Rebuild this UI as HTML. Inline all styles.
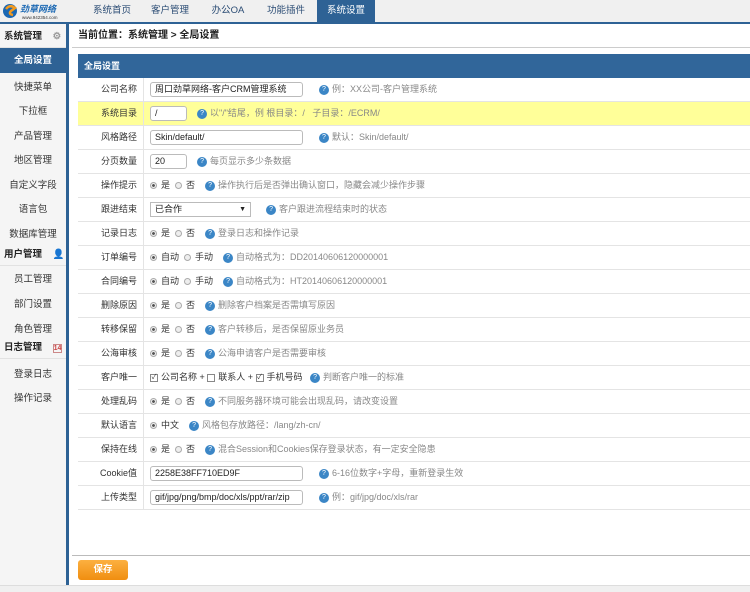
<!DOCTYPE html>
<html><head><meta charset="utf-8"><style>
*{margin:0;padding:0;box-sizing:border-box}
body{width:750px;height:592px;overflow:hidden;background:#fff;font-family:"Liberation Sans","Noto Sans CJK SC",sans-serif;font-size:9px;color:#333;position:relative}
.top{position:absolute;left:0;top:0;width:750px;height:24px;background:#f0f0f0;border-bottom:2px solid #2e6295}
.logo{position:absolute;left:2px;top:2px;width:70px;height:18px}
.tab{position:absolute;top:0;height:22px;width:58px;text-align:center;line-height:22px;font-size:9.5px;color:#2c4d75}
.tab.on{background:#2e6295;color:#fff}
.side{position:absolute;left:0;top:24px;width:69px;height:561px;background:#f5f5f5;border-right:3px solid #2e6295}
.sh{position:absolute;left:0;width:66px;height:22px;line-height:22px;padding-left:4px;font-size:9.5px;font-weight:bold;color:#222;border-bottom:1px solid #e2e2e2}
.si{position:absolute;left:0;width:66px;text-align:center;font-size:9.5px;color:#333}
.si.on{background:#2e6295;color:#fff;height:25px;line-height:25px;font-weight:bold}
.bc{position:absolute;left:72px;top:24px;width:678px;height:24px;line-height:24px;padding-left:6px;font-size:10px;font-weight:bold;color:#222;border-bottom:1px solid #ccc}
.ph{position:absolute;left:78px;top:54px;width:672px;height:24px;background:#31669a;color:#fff;font-weight:bold;line-height:24px;padding-left:6px;font-size:9px}
.row{position:absolute;left:78px;width:672px;height:24px;border-bottom:1px solid #e4e4e4;line-height:23px}
.row.y{background:#ffff99}
.lb{position:absolute;left:0;top:0;width:66px;height:23px;text-align:right;padding-right:6px;border-right:1px solid #e4e4e4;color:#333}
.v{position:absolute;left:72px;top:0;height:23px;white-space:nowrap}
.in{display:inline-block;vertical-align:middle;height:15px;border:1px solid #bbb;border-radius:3px;line-height:13px;padding-left:4px;background:#fff;color:#222}
.q{display:inline-block;vertical-align:middle;width:10px;height:10px;border-radius:50%;background:#3b86c6;color:#fff;font-size:7px;line-height:10px;text-align:center;margin:0 3px 0 0}
.w{margin-left:16px}
.h{color:#888}
.r{display:inline-block;vertical-align:middle;width:7px;height:7px;border-radius:50%;border:1px solid #aaa;background:#eee;margin-right:4px}
.r.c{background:radial-gradient(#555 35%,#eee 45%)}
.cb{display:inline-block;vertical-align:middle;width:8px;height:8px;border:1px solid #888;background:#fff;margin-right:3px;font-size:7px;line-height:6px;text-align:center}
.btn{position:absolute;left:78px;top:560px;width:50px;height:20px;background:linear-gradient(#fcb040,#f08e10);border-radius:3px;color:#fff;font-weight:bold;text-align:center;line-height:20px;font-size:9.5px}
</style></head><body>
<div class="top">
<svg class="logo" viewBox="0 0 70 18"><circle cx="8" cy="9" r="7" fill="#1b68b3"/><path d="M4 7 Q8 2 13 6 L9 9 Q6 12 11 13" stroke="#f39a1e" stroke-width="2.5" fill="none"/><text x="18" y="10" font-size="9" font-weight="bold" font-style="italic" fill="#1b68b3" font-family="Noto Sans CJK SC">劲草网络</text><text x="20" y="17" font-size="4.5" fill="#333">www.942354.com</text></svg>
<div class="tab" style="left:83px">系统首页</div>
<div class="tab" style="left:141px">客户管理</div>
<div class="tab" style="left:199px">办公OA</div>
<div class="tab" style="left:257px">功能插件</div>
<div class="tab on" style="left:317px">系统设置</div>
</div>
<div class="side">
<div class="sh" style="top:2px">系统管理 <span style="color:#999;margin-left:8px">⚙</span></div>
<div class="si on" style="top:24px">全局设置</div>
<div class="si" style="top:55px">快捷菜单</div>
<div class="si" style="top:79px">下拉框</div>
<div class="si" style="top:104px">产品管理</div>
<div class="si" style="top:128px">地区管理</div>
<div class="si" style="top:153px">自定义字段</div>
<div class="si" style="top:177px">语言包</div>
<div class="si" style="top:202px">数据库管理</div>
<div class="sh" style="top:220px">用户管理 <span style="color:#e08a3a;margin-left:8px">👤</span></div>
<div class="si" style="top:247px">员工管理</div>
<div class="si" style="top:272px">部门设置</div>
<div class="si" style="top:297px">角色管理</div>
<div class="sh" style="top:313px">日志管理 <span style="color:#c44;margin-left:8px;font-size:7px;border:1px solid #c88">14</span></div>
<div class="si" style="top:342px">登录日志</div>
<div class="si" style="top:366px">操作记录</div>
</div>
<div class="bc">当前位置：系统管理 &gt; 全局设置</div>
<div class="ph">全局设置</div>

<div class="row" style="top:78px"><div class="lb">公司名称</div><div class="v"><span class="in" style="width:153px">周口劲草网络-客户CRM管理系统</span><span class="q w">?</span><span class="h">例：XX公司-客户管理系统</span></div></div>
<div class="row y" style="top:102px"><div class="lb">系统目录</div><div class="v"><span class="in" style="width:37px">/</span> &nbsp; &nbsp;<span class="q">?</span><span class="h">以"/"结尾，例 根目录：/ &nbsp; 子目录：/ECRM/</span></div></div>
<div class="row" style="top:126px"><div class="lb">风格路径</div><div class="v"><span class="in" style="width:153px">Skin/default/</span><span class="q w">?</span><span class="h">默认：Skin/default/</span></div></div>
<div class="row" style="top:150px"><div class="lb">分页数量</div><div class="v"><span class="in" style="width:37px">20</span> &nbsp; &nbsp;<span class="q">?</span><span class="h">每页显示多少条数据</span></div></div>
<div class="row" style="top:174px"><div class="lb">操作提示</div><div class="v"><span class="r c"></span>是 &nbsp;<span class="r"></span>否 &nbsp; &nbsp;<span class="q">?</span><span class="h">操作执行后是否弹出确认窗口，隐藏会减少操作步骤</span></div></div>
<div class="row" style="top:198px"><div class="lb">跟进结束</div><div class="v"><span class="in" style="width:101px;border-radius:0">已合作<span style="float:right;margin-right:4px;font-size:7px">▼</span></span> &nbsp; &nbsp; &nbsp;<span class="q">?</span><span class="h">客户跟进流程结束时的状态</span></div></div>
<div class="row" style="top:222px"><div class="lb">记录日志</div><div class="v"><span class="r c"></span>是 &nbsp;<span class="r"></span>否 &nbsp; &nbsp;<span class="q">?</span><span class="h">登录日志和操作记录</span></div></div>
<div class="row" style="top:246px"><div class="lb">订单编号</div><div class="v"><span class="r c"></span>自动 &nbsp;<span class="r"></span>手动 &nbsp; &nbsp;<span class="q">?</span><span class="h">自动格式为：DD20140606120000001</span></div></div>
<div class="row" style="top:270px"><div class="lb">合同编号</div><div class="v"><span class="r c"></span>自动 &nbsp;<span class="r"></span>手动 &nbsp; &nbsp;<span class="q">?</span><span class="h">自动格式为：HT20140606120000001</span></div></div>
<div class="row" style="top:294px"><div class="lb">删除原因</div><div class="v"><span class="r c"></span>是 &nbsp;<span class="r"></span>否 &nbsp; &nbsp;<span class="q">?</span><span class="h">删除客户档案是否需填写原因</span></div></div>
<div class="row" style="top:318px"><div class="lb">转移保留</div><div class="v"><span class="r c"></span>是 &nbsp;<span class="r"></span>否 &nbsp; &nbsp;<span class="q">?</span><span class="h">客户转移后，是否保留原业务员</span></div></div>
<div class="row" style="top:342px"><div class="lb">公海审核</div><div class="v"><span class="r c"></span>是 &nbsp;<span class="r"></span>否 &nbsp; &nbsp;<span class="q">?</span><span class="h">公海申请客户是否需要审核</span></div></div>
<div class="row" style="top:366px"><div class="lb">客户唯一</div><div class="v"><span class="cb">✓</span>公司名称 + <span class="cb"></span>联系人 + <span class="cb">✓</span>手机号码 &nbsp; <span class="q">?</span><span class="h">判断客户唯一的标准</span></div></div>
<div class="row" style="top:390px"><div class="lb">处理乱码</div><div class="v"><span class="r c"></span>是 &nbsp;<span class="r"></span>否 &nbsp; &nbsp;<span class="q">?</span><span class="h">不同服务器环境可能会出现乱码，请改变设置</span></div></div>
<div class="row" style="top:414px"><div class="lb">默认语言</div><div class="v"><span class="r c"></span>中文 &nbsp; &nbsp;<span class="q">?</span><span class="h">风格包存放路径：/lang/zh-cn/</span></div></div>
<div class="row" style="top:438px"><div class="lb">保持在线</div><div class="v"><span class="r c"></span>是 &nbsp;<span class="r"></span>否 &nbsp; &nbsp;<span class="q">?</span><span class="h">混合Session和Cookies保存登录状态，有一定安全隐患</span></div></div>
<div class="row" style="top:462px"><div class="lb">Cookie值</div><div class="v"><span class="in" style="width:153px">2258E38FF710ED9F</span><span class="q w">?</span><span class="h">6-16位数字+字母，重新登录生效</span></div></div>
<div class="row" style="top:486px"><div class="lb">上传类型</div><div class="v"><span class="in" style="width:153px">gif/jpg/png/bmp/doc/xls/ppt/rar/zip</span><span class="q w">?</span><span class="h">例：gif/jpg/doc/xls/rar</span></div></div>

<div style="position:absolute;left:72px;top:555px;width:678px;border-top:1px solid #bbb"></div>
<div class="btn">保存</div>
<div style="position:absolute;left:0;top:585px;width:750px;height:7px;background:#f0f0f0;border-top:1px solid #ddd"></div>
</body></html>
